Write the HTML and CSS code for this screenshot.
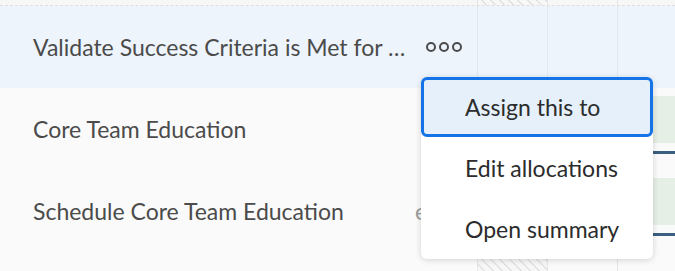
FILE: index.html
```html
<!DOCTYPE html>
<html lang="en">
<head>
  <meta charset="UTF-8">
  <title>Task allocations</title>
  <link rel="stylesheet" href="styles.css">
</head>
<body>
  <div class="board">
    <div class="row row-top">
      <div class="name"></div>
      <div class="day hatch"></div>
      <div class="day"></div>
      <div class="day"></div>
    </div>

    <div class="row row-active">
      <div class="name">
        <span class="title">Validate Success Criteria is Met for …</span>
        <svg class="more" width="38" height="12" viewBox="0 0 38 12">
          <circle cx="5" cy="6" r="4" />
          <circle cx="18" cy="6" r="4" />
          <circle cx="31" cy="6" r="4" />
        </svg>
      </div>
      <div class="day"></div>
      <div class="day"></div>
      <div class="day"></div>
    </div>

    <div class="row">
      <div class="name">
        <span class="title">Core Team Education</span>
      </div>
      <div class="day"></div>
      <div class="day"></div>
      <div class="day">
        <div class="bar"></div>
        <div class="progress"></div>
      </div>
    </div>

    <div class="row">
      <div class="name">
        <span class="title">Schedule Core Team Education</span>
        <span class="hours">est</span>
      </div>
      <div class="day"></div>
      <div class="day"></div>
      <div class="day">
        <div class="bar"></div>
        <div class="progress"></div>
      </div>
    </div>

    <div class="row row-bottom">
      <div class="name"></div>
      <div class="day hatch"></div>
      <div class="day"></div>
      <div class="day"></div>
    </div>

    <ul class="menu">
      <li class="menu-item focused">Assign this to</li>
      <li class="menu-item">Edit allocations</li>
      <li class="menu-item">Open summary</li>
    </ul>
  </div>
</body>
</html>
```

FILE: styles.css
```css
body {
  margin: 0;
  font-family: Lato, "Open Sans", sans-serif;
  background: #fafafa;
  overflow: hidden;
}
.board {
  position: relative;
  width: 675px;
  height: 271px;
  overflow: hidden;
}
.row {
  display: flex;
  height: 82px;
  background: #fafafa;
}
.name {
  width: 477px;
  flex: none;
  display: flex;
  align-items: center;
  padding-left: 33px;
  box-sizing: border-box;
  font-size: 23px;
  color: #4b4b4b;
}
.title {
  white-space: nowrap;
}
.more {
  margin-left: 21px;
  fill: none;
  stroke: #4b4b4b;
  stroke-width: 2;
}
.hours {
  margin-left: 71px;
  color: #9a9a9a;
}
.day {
  width: 70px;
  flex: none;
  border-left: 1px solid #e4e6e9;
  box-sizing: border-box;
}
.row-top {
  height: 5px;
  background: #f7f7f7;
  border-bottom: 1px dashed #dedede;
}
.row-top .name {
  padding: 0;
}
.row-active {
  height: 82px;
  background: #edf4fc;
}
.row-bottom {
  height: 30px;
}
.hatch {
  background: repeating-linear-gradient(45deg, transparent 0 5px, #e2e2e2 5px 6.5px);
  background-color: #f7f7f7;
}
.bar {
  height: 47px;
  margin-top: 8px;
  background: #e6efe6;
}
.progress {
  height: 3px;
  margin-top: 8px;
  margin-left: 34px;
  background: #3b5f80;
}
.menu {
  position: absolute;
  left: 421px;
  top: 77px;
  width: 232px;
  margin: 0;
  padding: 0;
  list-style: none;
  background: #fff;
  border-radius: 6px;
  box-shadow: 0 1px 6px rgba(0, 0, 0, 0.16);
}
.menu-item {
  height: 61px;
  display: flex;
  align-items: center;
  padding-left: 44px;
  font-size: 23px;
  color: #2c2c2c;
  box-sizing: border-box;
}
.focused {
  height: 60px;
  padding-left: 41px;
  background: #e6f0fb;
  border: 3px solid #1473e6;
  border-radius: 6px;
}
```
